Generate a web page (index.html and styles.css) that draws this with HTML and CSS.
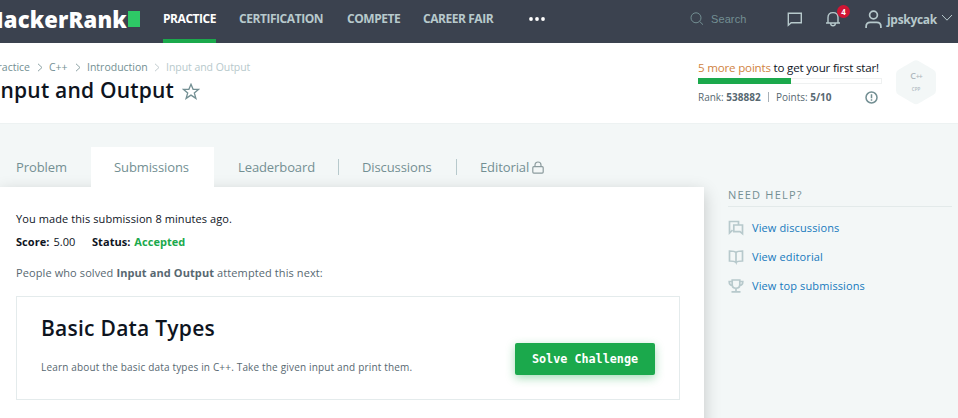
FILE: index.html
```html
<!DOCTYPE html>
<html lang="en">
<head>
<meta charset="utf-8">
<title>Input and Output | HackerRank</title>
<link rel="stylesheet" href="styles.css">
</head>
<body>
<header class="topbar">
  <div class="logo"><span class="logo-text">HackerRank</span><span class="logo-block"></span></div>
  <nav class="nav">
    <a class="nav-item active"><span>PRACTICE</span></a>
    <a class="nav-item cert"><span>CERTIFICATION</span></a>
    <a class="nav-item compete"><span>COMPETE</span></a>
    <a class="nav-item career"><span>CAREER FAIR</span></a>
    <svg class="more" width="18" height="6" viewBox="0 0 18 6" fill="#fff"><circle cx="3" cy="3" r="1.9"/><circle cx="9" cy="3" r="1.9"/><circle cx="15" cy="3" r="1.9"/></svg>
  </nav>
  <div class="tools">
    <svg class="i-search" width="14" height="14" viewBox="0 0 14 14" fill="none" stroke="#738f93"><circle cx="6" cy="5.8" r="5"/><path d="M9.6 9.4l3.4 3.3"/></svg>
    <span class="search">Search</span>
    <svg class="i-chat" width="16" height="15" viewBox="0 0 16 15" fill="none" stroke="#b7c9cc" stroke-width="1.4"><path d="M1.3 13.3V1.3h13v9.4H4.2z"/></svg>
    <span class="bell">
      <svg width="16" height="16" viewBox="0 0 16 16" fill="none" stroke="#b7c9cc" stroke-width="1.4"><path d="M1 12h14M3 12V6.6C3 3.5 5 1.6 8 1.6s5 1.9 5 5V12M5.7 12.5c0 3 4.6 3 4.6 0"/></svg>
      <span class="badge">4</span>
    </span>
    <svg class="i-user" width="17" height="19" viewBox="0 0 17 19" fill="none" stroke="#b7c9cc" stroke-width="1.7"><circle cx="8.5" cy="5" r="3.9"/><path d="M1.1 18v-1.5c0-3 1.5-4.2 4.2-4.2h6.4c2.7 0 4.2 1.2 4.2 4.2V18"/></svg>
    <span class="user">jpskycak</span>
    <svg class="i-down" width="12" height="8" viewBox="0 0 12 8" fill="none" stroke="#b7c9cc"><path d="M1 1l5 5.2L11 1"/></svg>
  </div>
</header>
<section class="hero">
  <div class="heading">
    <div class="crumbs">
      <span class="c1">Practice</span><svg width="6" height="9" viewBox="0 0 6 9"><path d="M1 .8l4 3.7-4 3.7"/></svg>
      <span class="c2">C++</span><svg width="6" height="9" viewBox="0 0 6 9"><path d="M1 .8l4 3.7-4 3.7"/></svg>
      <span class="c3">Introduction</span><svg class="faded" width="6" height="9" viewBox="0 0 6 9"><path d="M1 .8l4 3.7-4 3.7"/></svg>
      <span class="c4">Input and Output</span>
    </div>
    <div class="title-row">
      <h1>Input and Output</h1>
      <svg width="18" height="17" viewBox="0 0 18 17" fill="none" stroke="#738f93" stroke-width="1.3"><path d="M9 1.300l2.100 5h5.500l-4.300 3.600 1.600 5.500L9 12.100l-4.900 3.300 1.600-5.500L1.400 6.300h5.500z"/></svg>
    </div>
  </div>
  <div class="progress">
    <div class="goal"><span>5 more points</span> to get your first star!</div>
    <div class="bar"><div class="fill"></div></div>
    <div class="rank"><span class="r1">Rank: <b>538882</b></span><i></i><span class="r2">Points: <b>5/10</b></span>
      <svg width="13" height="13" viewBox="0 0 13 13" fill="none" stroke="#738f93" stroke-width="1.500"><circle cx="6.500" cy="6.500" r="5.500"/><path d="M6.500 3.200v4.100M6.500 8.300v1.500"/></svg>
    </div>
  </div>
  <div class="hex">
    <svg width="40" height="45" viewBox="0 0 40 45"><path d="M17.500 1.100q2.500-1.500 5 0l15 8.700q2.500 1.500 2.500 4.200v16.500q0 2.800-2.500 4.200l-15 8.800q-2.500 1.500-5 0l-15-8.800Q0 33.300 0 30.500V14q0-2.700 2.500-4.200z" fill="#f3f7f7"/></svg>
    <div class="hex-label"><span>C<small>++</small></span><em>CPP</em></div>
  </div>
</section>
<main class="content">
  <div class="left">
    <nav class="tabs">
      <a class="tab problem"><span>Problem</span></a>
      <a class="tab current"><span>Submissions</span></a>
      <a class="tab leader"><span>Leaderboard</span></a>
      <a class="tab discuss"><span>Discussions</span></a>
      <a class="tab editorial"><span>Editorial</span><svg width="12" height="13" viewBox="0 0 12 13" fill="none" stroke="#8c9c9e" stroke-width="1.200"><rect x=".8" y="5.700" width="10.400" height="6.400" rx="1"/><path d="M3 5.500V4c0-4 6-4 6 0v1.500"/></svg></a>
    </nav>
    <div class="panel">
      <p class="made">You made this submission 8 minutes ago.</p>
      <p class="status"><span class="score"><b>Score:</b> 5.00</span><span class="state"><b>Status:</b> <b class="ok">Accepted</b></span></p>
      <p class="people">People who solved <b>Input and Output</b> attempted this next:</p>
      <article class="card">
        <div>
          <h2>Basic Data Types</h2>
          <p>Learn about the basic data types in C++. Take the given input and print them.</p>
        </div>
        <button>Solve Challenge</button>
      </article>
    </div>
  </div>
  <aside class="help">
    <h3>NEED HELP?</h3>
    <a><svg width="16" height="16" viewBox="0 0 16 16"><path d="M10.500 4.500V1.500H1.500v11.500l3-2.800M5.800 5h8.700v8.800L12 11.700H5.800z"/></svg><span>View discussions</span></a>
    <a><svg width="16" height="16" viewBox="0 0 16 16"><path d="M8 3.500C7 2.300 5.500 2 1.500 2v10c4 0 5.500.2 6.500 1.500V3.500c1-1.200 2.500-1.500 6.500-1.500v10c-4 0-5.500.2-6.500 1.500"/></svg><span>View editorial</span></a>
    <a><svg width="16" height="16" viewBox="0 0 16 16"><path d="M4.200 2h7.600v4.500c0 5-7.600 5-7.600 0zM4.200 3.500h-3C1.200 6.500 2.500 7.500 4.600 7.700M11.800 3.500h3c0 3-1.300 4-3.400 4.200M8 10.500V13M3.500 13.800h9"/></svg><span>View top submissions</span></a>
  </aside>
</main>
</body>
</html>
```

FILE: styles.css
```css
* { box-sizing: border-box; }
body { margin: 0; width: 958px; height: 418px; overflow: hidden; background: #f3f7f7; color: #0e141e; font: 11px/16px "Open Sans", sans-serif; }
h1, h2, h3, p { margin: 0; }
span, a, p, h1, h2, h3, .goal { white-space: nowrap; }
svg { display: block; flex: none; }
b { font-weight: 700; }

.topbar { height: 43px; background: #3b424f; display: flex; }
.logo { width: 140px; height: 38px; display: flex; align-items: center; justify-content: flex-end; flex: none; }
.logo-text { color: #fff; font-size: 22px; font-weight: 800; line-height: 30px; letter-spacing: .15px; margin-right: 1px; }
.logo-block { width: 12px; height: 16px; background: #2ec866; flex: none; }
.nav { display: flex; margin-left: 23px; width: 526px; }
.nav-item { color: #b7c9cc; font-weight: 700; font-size: 12px; line-height: 38px; height: 43px; letter-spacing: -.45px; }
.active { width: 53px; color: #fff; border-bottom: 4px solid #1ba94c; }
.cert { margin-left: 23px; width: 84px; }
.compete { margin-left: 24px; width: 53px; }
.career { margin-left: 23px; width: 70px; }
.more { margin: 16px 0 0 35px; }
.tools { display: flex; align-items: flex-start; }
.i-search { margin: 12px 0 0 1px; }
.search { margin: 11px 0 0 7px; width: 76px; color: #738f93; font: 11px/16px "Liberation Sans", sans-serif; letter-spacing: .1px; }
.i-chat { margin-top: 12px; }
.bell { position: relative; margin: 11px 0 0 22px; width: 40px; }
.badge { position: absolute; left: 12px; top: -6px; width: 13px; height: 13px; border-radius: 50%; background: #d11534; color: #fff; font-size: 8px; line-height: 13px; font-weight: 700; text-align: center; }
.i-user { margin-top: 10px; }
.user { margin: 12px 0 0 5px; width: 54px; color: #b7c9cc; font-weight: 700; font-size: 12px; letter-spacing: -.3px; }
.i-down { margin-top: 14px; }

.hero { height: 81px; background: #fff; border-bottom: 1px solid #edf2f2; display: flex; }
.heading { width: 698px; padding-top: 17px; }
.crumbs { display: flex; align-items: center; height: 15px; font-size: 10.500px; line-height: 15px; color: #738f93; }
.crumbs path { fill: none; stroke: #8da2a5; stroke-width: 1; }
.crumbs .faded path { stroke: #c2cccf; }
.c1 { width: 37px; display: flex; justify-content: flex-end; padding-right: 7px; }
.c2 { margin-left: 6px; width: 26px; }
.c3 { margin-left: 6px; width: 67px; }
.c4 { margin-left: 6px; color: #b7c9cc; letter-spacing: -.05px; }
.title-row { display: flex; height: 30px; align-items: center; }
h1 { width: 174px; font-size: 21px; line-height: 30px; font-weight: 600; display: flex; justify-content: flex-end; letter-spacing: .2px; }
.title-row svg { margin: 2px 0 0 8px; }
.progress { width: 184px; padding-top: 17px; }
.goal { font-size: 11.600px; line-height: 16px; letter-spacing: -.2px; }
.goal span { color: #d0833f; }
.bar { margin-top: 2px; height: 6px; border: 1px solid #eff1f1; display: flex; }
.fill { width: 93px; height: 6px; margin: -1px; background: #1ba94c; flex: none; }
.rank { display: flex; align-items: center; height: 16px; margin-top: 5px; color: #576871; font-size: 10px; }
.r1 { width: 70px; }
.rank i { width: 1px; height: 10px; background: #a8b0b7; margin-right: 7px; }
.r2 { width: 89px; }
.hex { margin: 17px 0 0 14px; width: 40px; height: 45px; display: grid; }
.hex > * { grid-area: 1 / 1; }
.hex-label { display: flex; flex-direction: column; align-items: center; padding-top: 10px; color: #b0b9bf; font-size: 9px; line-height: 12px; font-weight: 600; }
.hex-label small { font-size: 7px; letter-spacing: -1px; }
.hex-label em { font-style: normal; font-size: 4.500px; line-height: 12px; }

.content { display: flex; height: 294px; }
.left { width: 704px; padding-top: 23px; }
.tabs { display: flex; height: 40px; position: relative; z-index: 1; }
.tab { color: #738f93; font-size: 13px; line-height: 40px; display: flex; align-items: center; letter-spacing: -.1px; }
.problem { width: 91px; padding-left: 16px; }
.current { width: 123px; padding-left: 23px; background: #fff; }
.leader { width: 124px; padding-left: 24px; }
.discuss, .editorial { padding-left: 24px; background: linear-gradient(#b7c9cc, #b7c9cc) 0 12px / 1px 16px no-repeat; }
.discuss { width: 118px; }
.editorial svg { margin-left: 3px; }
.panel { height: 260px; padding: 24px 24px 0 16px; background: #fff; box-shadow: 0 5px 16px rgba(0,0,0,.2); }
.made { letter-spacing: .09px; }
.status { display: flex; height: 16px; margin-top: 7px; word-spacing: 1px; letter-spacing: .05px; }
.score { width: 76px; }
.ok { color: #1ba94c; }
.people { margin-top: 15px; color: #576871; letter-spacing: .1px; }
.card { height: 104px; margin-top: 15px; border: 1px solid #e4ebec; padding: 15px 24px 0; display: flex; justify-content: space-between; }
h2 { font-size: 21px; font-weight: 600; line-height: 32px; letter-spacing: .25px; }
.card p { margin-top: 15px; font-size: 10px; color: #576871; letter-spacing: .17px; }
button { width: 140px; height: 32px; margin-top: 31px; padding: 0; border: 0; border-radius: 2px; background: #1ba94c; color: #fff; font: bold 11.750px/32px "DejaVu Sans Mono", monospace; box-shadow: 0 3px 10px rgba(27,169,76,.4); flex: none; }
.help { margin-left: 24px; width: 224px; padding-top: 63px; }
.help h3 { height: 20px; border-bottom: 1px solid #e3eaea; color: #738f93; font-size: 11px; font-weight: 400; line-height: 16px; letter-spacing: 1.200px; margin-bottom: 6px; }
.help a { display: flex; height: 29px; align-items: center; color: #1579bd; letter-spacing: .12px; }
.help a svg { margin-right: 8px; fill: none; stroke: #b7c9cc; stroke-width: 1.700; }
```
